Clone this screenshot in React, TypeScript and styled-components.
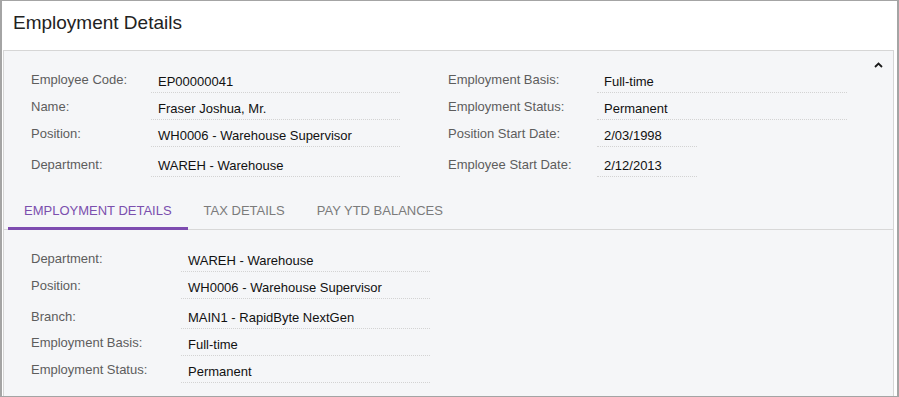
import React from "react";
import styled, { createGlobalStyle } from "styled-components";

const Global = createGlobalStyle`
  html, body { margin: 0; padding: 0; background: #fff; }
  body { font-family: "Liberation Sans", Arial, sans-serif; }
  * { box-sizing: border-box; }
`;

const Frame = styled.div`
  width: 899px;
  height: 397px;
  border: 1px solid #a4a4a4;
  border-left-width: 2px;
  border-right-width: 2px;
  background: #fff;
  overflow: hidden;
  display: flex;
  flex-direction: column;
`;

const Title = styled.h1`
  margin: 0;
  padding: 10px 0 15px 11px;
  font-size: 19px;
  line-height: 24px;
  font-weight: 400;
  color: #222;
`;

const Panel = styled.section`
  position: relative;
  flex: 1;
  margin: 0 3px 0 1px;
  border: 1px solid #d6d6d6;
  border-bottom: none;
  background: #f5f6f8;
`;

const Collapse = styled.button`
  position: absolute;
  top: 9px;
  right: 8px;
  width: 13px;
  height: 9px;
  padding: 0;
  border: none;
  background: transparent;
  display: flex;
  align-items: center;
  justify-content: center;
  cursor: pointer;
`;

const HeaderSection = styled.div`
  display: flex;
  padding: 15px 0 0 27px;
`;

const Column = styled.div<{ $gapRight?: number }>`
  display: flex;
  flex-direction: column;
  margin-right: ${(p) => p.$gapRight ?? 0}px;
`;

const Row = styled.div<{ $tall?: boolean }>`
  display: flex;
  height: ${(p) => (p.$tall ? 30 : 27)}px;
`;

const Label = styled.div<{ $width: number; $tall?: boolean }>`
  width: ${(p) => p.$width}px;
  padding-top: ${(p) => (p.$tall ? 8 : 4)}px;
  font-size: 13px;
  line-height: 20px;
  color: #5d5d5d;
  white-space: nowrap;
`;

const Value = styled.div<{ $width: number; $tall?: boolean }>`
  width: ${(p) => p.$width}px;
  height: 100%;
  padding: ${(p) => (p.$tall ? 9 : 6)}px 0 0 7px;
  border-bottom: 1px dotted #d3d3d3;
  font-size: 13px;
  line-height: 20px;
  color: #111;
  white-space: nowrap;
`;

const TabBar = styled.nav`
  display: flex;
  margin-top: 17px;
  padding-left: 4px;
  border-bottom: 1px solid #d8d8d8;
`;

const Tab = styled.div<{ $active?: boolean }>`
  padding: 8px 16px;
  margin-bottom: -1px;
  font-size: 13px;
  line-height: 17px;
  text-transform: uppercase;
  color: ${(p) => (p.$active ? "#7b4fae" : "#7b7b7b")};
  border-bottom: 3px solid ${(p) => (p.$active ? "#7e4cb0" : "transparent")};
  cursor: pointer;
`;

const DetailSection = styled.div`
  padding: 15px 0 0 27px;
  display: flex;
  flex-direction: column;
`;

type Field = { label: string; value: string; tall?: boolean; short?: boolean };

const left: Field[] = [
  { label: "Employee Code:", value: "EP00000041" },
  { label: "Name:", value: "Fraser Joshua, Mr." },
  { label: "Position:", value: "WH0006 - Warehouse Supervisor" },
  { label: "Department:", value: "WAREH - Warehouse", tall: true },
];

const right: Field[] = [
  { label: "Employment Basis:", value: "Full-time" },
  { label: "Employment Status:", value: "Permanent" },
  { label: "Position Start Date:", value: "2/03/1998", short: true },
  { label: "Employee Start Date:", value: "2/12/2013", short: true, tall: true },
];

const details: Field[] = [
  { label: "Department:", value: "WAREH - Warehouse" },
  { label: "Position:", value: "WH0006 - Warehouse Supervisor" },
  { label: "Branch:", value: "MAIN1 - RapidByte NextGen", tall: true },
  { label: "Employment Basis:", value: "Full-time" },
  { label: "Employment Status:", value: "Permanent" },
];

const FieldRow = ({ f, lw, vw }: { f: Field; lw: number; vw: number }) => (
  <Row $tall={f.tall}>
    <Label $width={lw} $tall={f.tall}>{f.label}</Label>
    <Value $width={f.short ? 100 : vw} $tall={f.tall}>{f.value}</Value>
  </Row>
);

export default function App() {
  return (
    <>
      <Global />
      <Frame>
        <Title>Employment Details</Title>
        <Panel>
          <Collapse aria-label="Collapse">
            <svg width="9" height="6" viewBox="0 0 9 6">
              <polyline points="1,5 4.5,1.5 8,5" fill="none" stroke="#1a1a1a" strokeWidth="1.8" />
            </svg>
          </Collapse>
          <HeaderSection>
            <Column $gapRight={48}>
              {left.map((f) => (
                <FieldRow key={f.label} f={f} lw={120} vw={249} />
              ))}
            </Column>
            <Column>
              {right.map((f) => (
                <FieldRow key={f.label} f={f} lw={149} vw={250} />
              ))}
            </Column>
          </HeaderSection>
          <TabBar>
            <Tab $active>Employment Details</Tab>
            <Tab>Tax Details</Tab>
            <Tab>Pay YTD Balances</Tab>
          </TabBar>
          <DetailSection>
            {details.map((f) => (
              <FieldRow key={f.label} f={f} lw={150} vw={249} />
            ))}
          </DetailSection>
        </Panel>
      </Frame>
    </>
  );
}
